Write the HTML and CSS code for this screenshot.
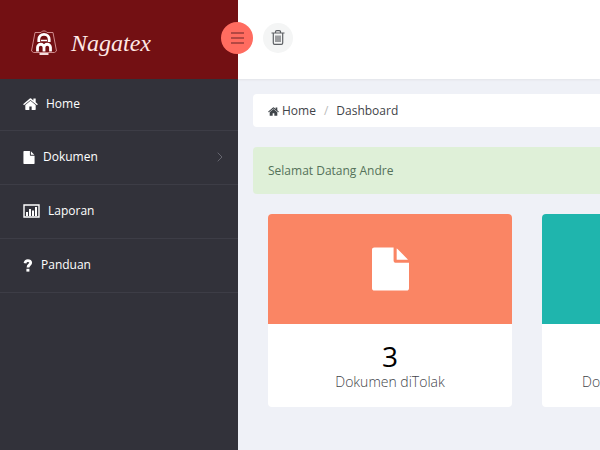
FILE: index.html
```html
<!DOCTYPE html>
<html lang="id">
<head>
<meta charset="utf-8">
<meta name="viewport" content="width=device-width, initial-scale=1">
<title>Nagatex</title>
<link rel="stylesheet" href="styles.css">
</head>
<body>
<svg class="symbols" aria-hidden="true">
  <symbol id="home" viewBox="0 0 1664 1312">
    <path d="M1408 768v480q0 26-19 45t-45 19H960V928H704v384H320q-26 0-45-19t-19-45V768q0-1 .5-3t.5-3l575-474 575 474q1 2 1 6zm223-69l-62 74q-8 9-21 11h-3q-13 0-21-7L832 200 140 777q-12 8-24 7-13-2-21-11l-62-74q-8-10-7-23.500t11-21.500L756 55q32-26 76-26t76 26l244 204V64q0-14 9-23t23-9h192q14 0 23 9t9 23v408l219 182q10 8 11 21.500t-7 23.500z"/>
  </symbol>
  <symbol id="file" viewBox="0 0 1536 1792">
    <path d="M1024 512V40q22 14 36 28l408 408q14 14 28 36zm-128 32q0 40 28 68t68 28h544v1056q0 40-28 68t-68 28H96q-40 0-68-28t-28-68V96q0-40 28-68T96 0h800z"/>
  </symbol>
</svg>
<div class="layout">
  <aside class="sidebar">
    <a class="brand" href="#">
      <svg class="brand-mark" viewBox="0 0 28 26" aria-hidden="true">
        <path class="frame" d="M5 2.500h6l1.500-1.500h3L17 2.500h6L26.500 21l-2 1.500h-21L1.500 21z"/>
        <path class="arch" d="M8.800 12V9.500a5.200 5.200 0 0 1 10.400 0V12"/>
        <path class="bar" d="M11 10.500h6"/>
        <path class="arch" d="M7.500 21.500V17.500a3.200 3.200 0 0 1 6.500 0v4m0-4a3.200 3.200 0 0 1 6.500 0v4"/>
        <path class="base" d="M9.500 23h9v2h-9z"/>
      </svg>
      <span class="brand-name">Nagatex</span>
    </a>
    <nav class="menu">
      <a href="#"><svg class="icon-home" aria-hidden="true"><use href="#home"/></svg>Home</a>
      <a href="#"><svg class="icon-file" aria-hidden="true"><use href="#file"/></svg>Dokumen
        <svg class="chevron" viewBox="0 0 6 10" aria-hidden="true"><path d="M.7.7 5 5 .7 9.300"/></svg></a>
      <a href="#"><svg class="icon-chart" viewBox="0 0 17 14" aria-hidden="true"><path class="outline" d="M1 1h15v12H1z"/><path d="M3 8h2v4H3zM6 5h2v7H6zM9 6.500h2V12H9zM12 3h2v9h-2z"/></svg>Laporan</a>
      <a href="#"><svg class="icon-help" viewBox="0 0 10 13" aria-hidden="true"><path class="hook" d="M2 4.200C2.300 2.300 3.400 1.600 4.900 1.600c1.700 0 2.800.8 2.800 2.200C7.700 5.700 5 5.600 5 8.500"/><path d="M3.400 9.800h3v2.800h-3z"/></svg>Panduan</a>
    </nav>
  </aside>
  <div class="page">
    <header class="topbar">
      <button class="round toggle" type="button" aria-label="Menu">
        <svg viewBox="0 0 13 12" aria-hidden="true"><path d="M0 1h13M0 6h13M0 11h13"/></svg>
      </button>
      <button class="round trash" type="button" aria-label="Hapus">
        <svg viewBox="0 0 14 15" aria-hidden="true"><path d="M.5 3h13M4.500 3V2q0-1.300 1.300-1.300h2.400Q9.500.7 9.500 2v1M2.300 3v10q0 1.300 1.300 1.300h6.800q1.300 0 1.300-1.300V3M5 5.500V12M7 5.500V12M9 5.500V12"/></svg>
      </button>
    </header>
    <main class="content">
      <nav class="breadcrumb">
        <a href="#"><svg class="crumb-home" aria-hidden="true"><use href="#home"/></svg>Home</a>
        <span class="slash">/</span>
        <span>Dashboard</span>
      </nav>
      <p class="welcome">Selamat Datang Andre</p>
      <div class="cards">
        <section class="card">
          <div class="cover coral"><svg aria-hidden="true"><use href="#file"/></svg></div>
          <div class="detail"><strong>3</strong><span>Dokumen diTolak</span></div>
        </section>
        <section class="card">
          <div class="cover teal"></div>
          <div class="detail start"><span>Do</span></div>
        </section>
      </div>
    </main>
  </div>
</div>
</body>
</html>
```
FILE: styles.css
```css
* { box-sizing: border-box; }

body {
  margin: 0;
  background: #eff1f7;
  color: #3f4449;
  font: 12px/20px "Open Sans", "Noto Sans", sans-serif;
}

a { color: inherit; text-decoration: none; }
svg { fill: currentColor; flex: none; }
.symbols { position: absolute; width: 0; height: 0; }

.layout { display: flex; min-height: 100vh; }

.sidebar {
  position: relative;
  flex: 0 0 238px;
  background: #32323a;
  color: #fff;
}

.brand {
  display: flex;
  align-items: center;
  gap: 13px;
  height: 79px;
  padding: 6px 30px 0;
  background: #731013;
}
.brand-mark { width: 28px; height: 26px; }
.brand-mark path { fill: none; stroke: #fff; }
.brand-mark .frame { stroke: #cf8a8c; }
.brand-mark .arch { stroke-width: 2.800; }
.brand-mark .bar { stroke-width: 1.500; }
.brand-mark .base { fill: #f3dcdc; stroke: none; }
.brand-name {
  color: #ffe9e6;
  font: italic 24px/40px "Viner Hand ITC", "Liberation Serif", cursive;
}

.menu a {
  display: flex;
  align-items: center;
  gap: 8px;
  height: 54px;
  padding: 0 15px 1px 23px;
  border-bottom: 1px solid #3d3d46;
  font-weight: 500;
}
.menu a:first-child { height: 52px; }
.icon-home { width: 15px; height: 12px; }
.icon-file { width: 12px; height: 13px; }
.icon-chart { width: 17px; height: 14px; }
.icon-chart .outline { fill: none; stroke: #fff; stroke-width: 1.400; }
.icon-help { width: 10px; height: 13px; }
.icon-help .hook { fill: none; stroke: #fff; stroke-width: 2.800; }
.chevron {
  width: 6px;
  height: 10px;
  margin-left: auto;
  fill: none;
  stroke: #65656e;
}

.page { flex: 1; min-width: 0; }

.topbar {
  display: flex;
  align-items: center;
  gap: 10px;
  height: 79px;
  padding-bottom: 4px;
  background: #fff;
  box-shadow: 0 1px 2px #e2e3e8;
}
.round {
  display: flex;
  align-items: center;
  justify-content: center;
  padding: 0;
  border: 0;
  border-radius: 50%;
}
.toggle {
  position: relative;
  width: 32px;
  height: 32px;
  margin-left: -17px;
  background: #ff6c60;
}
.toggle svg { width: 13px; height: 12px; stroke: #b44843; stroke-width: 2; }
.trash { width: 30px; height: 30px; background: #f4f5f5; }
.trash svg { width: 14px; height: 15px; fill: none; stroke: #5e6165; stroke-width: 1.200; }

.content { padding: 15px 0 0 15px; overflow: hidden; }

.breadcrumb {
  display: flex;
  gap: 8px;
  padding: 7px 15px 6px;
  border-radius: 4px 0 0 4px;
  background: #fff;
}
.breadcrumb a { display: flex; align-items: center; gap: 3px; }
.crumb-home { width: 11px; height: 9px; }
.slash { color: #bbb; }

.welcome {
  margin: 20px 0;
  padding: 14px 15px 13px;
  border-radius: 4px 0 0 4px;
  background: #dff0d8;
  color: #55725a;
}

.cards { display: flex; gap: 30px; padding-left: 15px; }
.card {
  flex: 0 0 244px;
  border-radius: 4px;
  background: #fff;
  overflow: hidden;
}
.cover {
  display: flex;
  align-items: center;
  justify-content: center;
  height: 110px;
}
.cover svg { width: 37px; height: 44px; color: #fff; }
.coral { background: #fa8564; }
.teal { background: #1fb5ad; }
.detail {
  display: flex;
  flex-direction: column;
  align-items: center;
  justify-content: flex-end;
  height: 83px;
  padding-bottom: 15px;
  font-size: 14px;
  font-weight: 300;
}
.detail strong {
  color: #000;
  font-size: 28px;
  font-weight: 400;
  line-height: 32px;
}
.detail.start { align-items: flex-start; padding-left: 40px; }
```
